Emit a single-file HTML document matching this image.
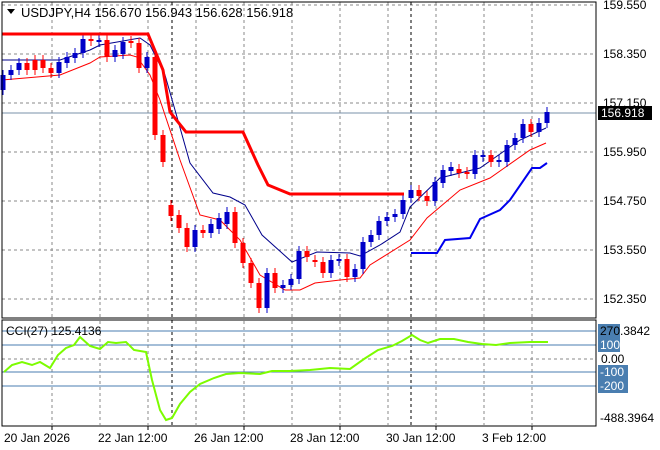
<!DOCTYPE html><html><head><style>
body{margin:0;background:#fff;width:660px;height:450px;overflow:hidden;font-family:"Liberation Sans",sans-serif;font-size:12px}
svg{position:absolute;left:0;top:0}
</style></head><body>
<svg width="660" height="450" xmlns="http://www.w3.org/2000/svg" font-family="Liberation Sans, sans-serif" font-size="12">
<rect width="660" height="450" fill="#fff"/>
<g stroke="#8a8a8a" stroke-dasharray="3,3" stroke-width="1">
<line x1="52" y1="2" x2="52" y2="318"/><line x1="100" y1="2" x2="100" y2="318"/><line x1="148" y1="2" x2="148" y2="318"/><line x1="196" y1="2" x2="196" y2="318"/><line x1="244" y1="2" x2="244" y2="318"/><line x1="292" y1="2" x2="292" y2="318"/><line x1="340" y1="2" x2="340" y2="318"/><line x1="388" y1="2" x2="388" y2="318"/><line x1="436" y1="2" x2="436" y2="318"/><line x1="484" y1="2" x2="484" y2="318"/><line x1="532" y1="2" x2="532" y2="318"/>
<line x1="52" y1="321" x2="52" y2="425"/><line x1="100" y1="321" x2="100" y2="425"/><line x1="148" y1="321" x2="148" y2="425"/><line x1="196" y1="321" x2="196" y2="425"/><line x1="244" y1="321" x2="244" y2="425"/><line x1="292" y1="321" x2="292" y2="425"/><line x1="340" y1="321" x2="340" y2="425"/><line x1="388" y1="321" x2="388" y2="425"/><line x1="436" y1="321" x2="436" y2="425"/><line x1="484" y1="321" x2="484" y2="425"/><line x1="532" y1="321" x2="532" y2="425"/>
<line x1="2" y1="5" x2="596" y2="5"/><line x1="2" y1="54" x2="596" y2="54"/><line x1="2" y1="103" x2="596" y2="103"/><line x1="2" y1="152" x2="596" y2="152"/><line x1="2" y1="201" x2="596" y2="201"/><line x1="2" y1="250" x2="596" y2="250"/><line x1="2" y1="299" x2="596" y2="299"/>
<line x1="2" y1="359" x2="596" y2="359"/>
</g>
<g stroke="#000" stroke-dasharray="3,3"><line x1="172" y1="2" x2="172" y2="425"/><line x1="411" y1="2" x2="411" y2="425"/></g>
<line x1="2" y1="113" x2="596" y2="113" stroke="#7890a8"/>
<g stroke="#4a7eb0"><line x1="2" y1="331" x2="596" y2="331"/><line x1="2" y1="345" x2="596" y2="345"/><line x1="2" y1="372" x2="596" y2="372"/><line x1="2" y1="386" x2="596" y2="386"/></g>
<polyline fill="none" stroke="#00008b" stroke-width="1" points="2,60 60,60 90,50 100,45 140,38 150,45 165,75 175,110 190,163 213,193 230,197 245,205 262,235 292,262 317,252 350,253 360,256 380,245 400,232 410,207 440,178 480,168 520,140 546,128"/>
<polyline fill="none" stroke="#ff0000" stroke-width="1" points="2,80 60,75 90,63 100,57 130,55 137,57 150,75 160,100 180,160 200,215 220,220 240,240 260,275 285,290 300,290 315,283 340,280 360,278 370,265 410,240 427,218 460,190 490,178 530,150 546,143"/>
<g id="c"></g>
<polyline fill="none" stroke="#ff0000" stroke-width="3" points="2,34 148,34 163,70 170,112 186,132 243,132 258,165 268,185 290,194 404,194"/>
<polyline fill="none" stroke="#0000ee" stroke-width="2" points="411,253 437,253 445,240 470,238 480,219 500,210 510,200 532,168 540,168 547,163"/>
<polyline fill="none" stroke="#7cfc00" stroke-width="2" points="4,372 12,365 22,362 32,365 40,362 50,368 58,355 66,348 74,345 80,337 90,346 100,349 108,342 116,343 126,342 134,350 146,352 152,380 160,410 166,420 172,418 180,404 190,392 200,384 214,378 226,374 240,373 260,374 272,371 290,371 310,370 330,368 350,369 364,359 378,350 392,346 402,341 412,335 420,340 428,343 440,339 454,339 468,342 482,344 496,345 510,343 530,342 548,342"/>
<rect x="2" y="2" width="594" height="316" fill="none" stroke="#000"/>
<rect x="2" y="320" width="594" height="106" fill="none" stroke="#000"/>
<path d="M7 9 L15 9 L11 14Z" fill="#000"/>
<text x="21" y="17" font-size="13">USDJPY,H4  156.670 156.943 156.628 156.918</text>
<text x="6" y="335">CCI(27) 125.4136</text>
<g fill="#000"><text x="603" y="9">159.550</text><text x="603" y="58">158.350</text><text x="603" y="107">157.150</text><text x="603" y="156">155.950</text><text x="603" y="205">154.750</text><text x="603" y="254">153.550</text><text x="603" y="303">152.350</text></g>
<rect x="598" y="106" width="54" height="14" fill="#000"/><text x="601" y="117" fill="#fff">156.918</text>
<g fill="#4a7eb0"><rect x="598" y="324" width="22" height="14"/><rect x="598" y="338" width="22" height="14"/><rect x="598" y="365" width="30" height="14"/><rect x="598" y="379" width="30" height="14"/></g>
<text x="600" y="335" fill="#000">270.3842</text>
<g fill="#fff"><text x="600" y="349">100</text><text x="600" y="376">-100</text><text x="600" y="390">-200</text></g>
<text x="601" y="363">0.00</text><text x="600" y="422">-488.3964</text>
<g stroke="#000"><line x1="52" y1="426" x2="52" y2="430"/><line x1="148" y1="426" x2="148" y2="430"/><line x1="244" y1="426" x2="244" y2="430"/><line x1="340" y1="426" x2="340" y2="430"/><line x1="436" y1="426" x2="436" y2="430"/><line x1="532" y1="426" x2="532" y2="430"/></g>
<text x="4" y="442">20 Jan 2026</text><text x="98" y="442">22 Jan 12:00</text><text x="194" y="442">26 Jan 12:00</text><text x="290" y="442">28 Jan 12:00</text><text x="386" y="442">30 Jan 12:00</text><text x="482" y="442">3 Feb 12:00</text>
</svg>
<script>
var d=[[90,75],[75,70],[70,63],[63,70],[60,70],[60,68],[68,73],[73,62],[63,57],[58,53],[53,39],[39,41],[41,40],[40,57],[57,50],[54,42],[41,43],[43,68],[68,57],[57,135],[135,162],[205,216],[215,228],[228,247],[247,230],[230,233],[233,224],[229,218],[224,212],[212,243],[243,263],[263,283],[283,308],[308,273],[273,288],[288,285],[285,279],[279,251],[251,257],[260,262],[262,273],[273,260],[260,259],[259,277],[277,269],[269,242],[242,235],[235,221],[221,217],[217,214],[214,200],[198,190],[190,196],[196,201],[201,182],[183,170],[171,167],[169,173],[172,174],[174,155],[156,155],[155,162],[162,160],[162,145],[145,138],[138,124],[124,132],[132,123],[123,112]];
var g=document.getElementById('c'),h='';
for(var i=0;i<d.length;i++){var x=3+i*8,o=d[i][0],c=d[i][1],up=c<o,col=up?'#0000c8':'#ff0000',t=Math.min(o,c),b=Math.max(o,c);if(b-t<2)b=t+2;
h+='<line x1="'+x+'" y1="'+(t-5)+'" x2="'+x+'" y2="'+(b+5)+'" stroke="'+col+'"/><rect x="'+(x-2.5)+'" y="'+t+'" width="5" height="'+(b-t)+'" fill="'+col+'"/>';}
g.innerHTML=h;
</script>
</body></html>
